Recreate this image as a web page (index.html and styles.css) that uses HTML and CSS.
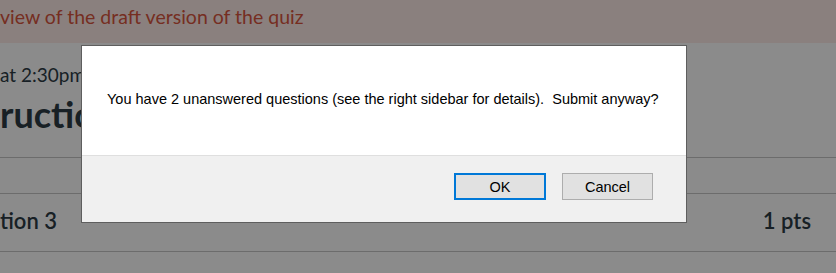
FILE: index.html
```html
<!DOCTYPE html>
<html>
<head>
<meta charset="utf-8">
<link rel="stylesheet" href="styles.css">
</head>
<body>
<div class="page">
  <div class="banner">view of the draft version of the quiz</div>
  <div class="content">
    <div class="due">at 2:30pm on the quiz</div>
    <h1 class="title">ructions</h1>
    <div class="rule rule-a"></div>
    <div class="rule rule-b"></div>
    <div class="question">
      <span class="qname">tion 3</span>
      <span class="qpts">1 pts</span>
    </div>
  </div>
</div>
<div class="overlay"></div>
<div class="dialog">
  <div class="dialog-body">You have 2 unanswered questions (see the right sidebar for details).&nbsp; Submit anyway?</div>
  <div class="dialog-footer">
    <button class="btn btn-ok">OK</button>
    <button class="btn">Cancel</button>
  </div>
</div>
</body>
</html>
```
FILE: styles.css
```css
html, body {
  margin: 0;
  padding: 0;
  width: 836px;
  height: 273px;
  overflow: hidden;
  background: #ffffff;
  font-family: Lato, "Noto Sans", sans-serif;
}
.page {
  width: 836px;
}
.banner {
  height: 43px;
  box-sizing: border-box;
  padding-top: 4px;
  background: #fdebe7;
  color: #d8553e;
  font-size: 19.5px;
  line-height: 26px;
  white-space: nowrap;
}
.content {
  padding-top: 20px;
}
.due {
  font-size: 19px;
  line-height: 24px;
  color: #2d3b45;
  white-space: nowrap;
}
.title {
  margin: 6px 0 0 0;
  font-size: 36px;
  line-height: 42px;
  font-weight: 700;
  color: #2d3b45;
  white-space: nowrap;
}
.rule {
  height: 1px;
  background: #c7c7c7;
}
.rule-a {
  margin-top: 22px;
}
.rule-b {
  margin-top: 35px;
}
.question {
  display: flex;
  justify-content: space-between;
  align-items: center;
  height: 56px;
  padding-right: 25px;
  border-bottom: 1px solid #c7c7c7;
  color: #2d3b45;
  font-size: 22px;
  font-weight: 600;
  line-height: 26px;
  padding-top: 1px;
  box-sizing: content-box;
}
.qname {
  margin-top: -4px;
}
.qpts {
  margin-top: -4px;
}
.overlay {
  position: fixed;
  inset: 0;
  background: rgba(0, 0, 0, 0.455);
}
.dialog {
  position: absolute;
  left: 81px;
  top: 45px;
  width: 604px;
  border: 1px solid #5e5e5e;
  background: #ffffff;
  font-family: "Liberation Sans", Arial, sans-serif;
  font-size: 14.5px;
  color: #000000;
}
.dialog-body {
  height: 110px;
  box-sizing: border-box;
  padding: 45px 0 0 25px;
  line-height: 17px;
  white-space: nowrap;
  border-bottom: 1px solid #dfdfdf;
}
.dialog-footer {
  height: 66px;
  box-sizing: border-box;
  background: #f0f0f0;
  display: flex;
  justify-content: flex-end;
  align-items: flex-start;
  gap: 16px;
  padding: 17px 33px 0 0;
}
.btn {
  width: 91px;
  height: 27px;
  box-sizing: border-box;
  border: 1px solid #adadad;
  background: #e1e1e1;
  font-family: "Liberation Sans", Arial, sans-serif;
  font-size: 14.5px;
  color: #000000;
  padding: 0;
  margin: 0;
}
.btn-ok {
  width: 92px;
  border: 2px solid #0078d7;
}
```
